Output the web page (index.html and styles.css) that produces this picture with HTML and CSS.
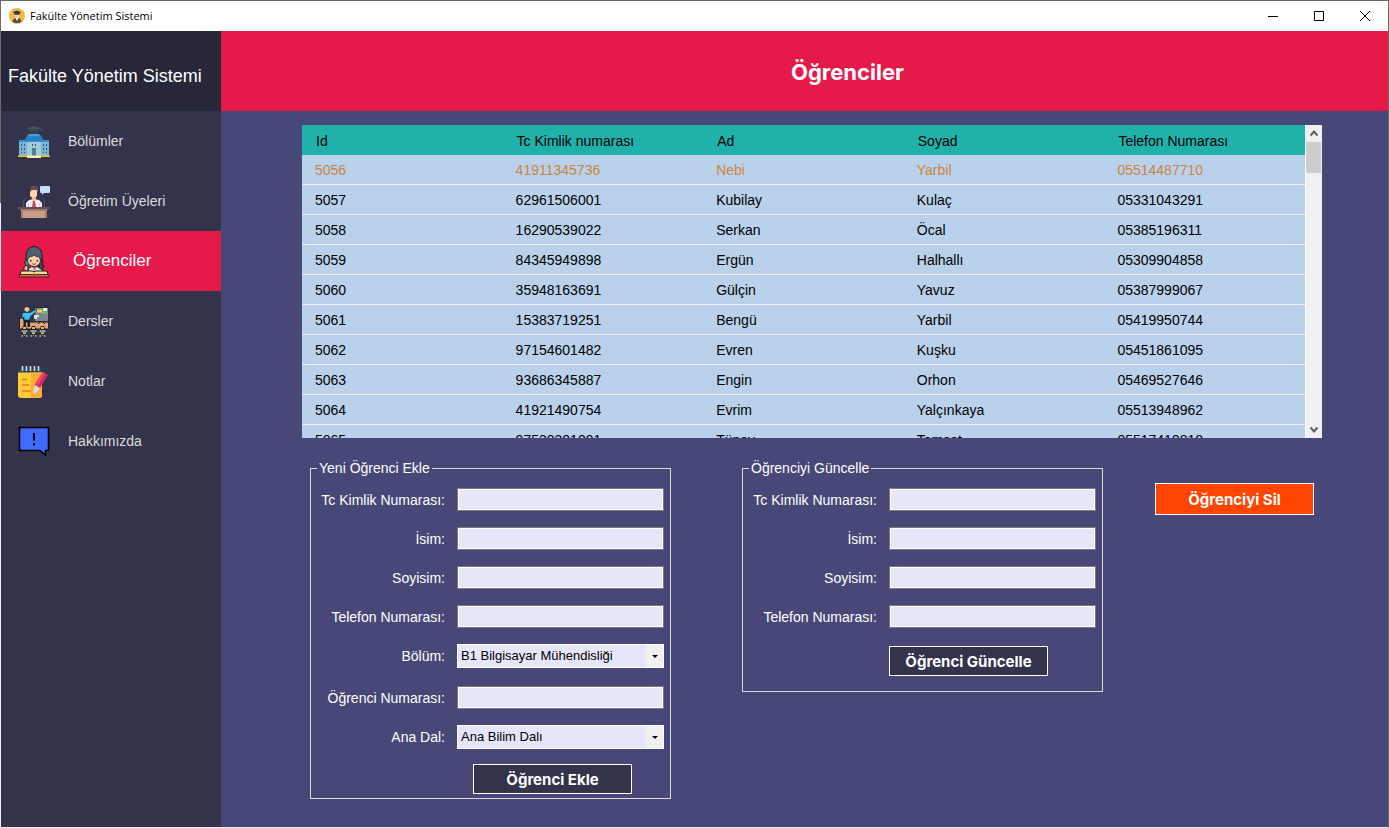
FILE: index.html
```html
<!DOCTYPE html>
<html lang="tr">
<head>
<meta charset="utf-8">
<title>Fakülte Yönetim Sistemi</title>
<meta name="viewport" content="width=device-width, initial-scale=1">
<link rel="stylesheet" href="styles.css">
</head>
<body>
<div class="window">
  <header class="titlebar">
    <svg class="app-icon" viewBox="0 0 16 16" aria-hidden="true"><circle cx="8" cy="8" r="8" fill="#f5b83d"/><path d="M3.500 13.500Q4 10.500 6.500 10h3q2.500.5 3 3.500Q8 16.500 3.500 13.500z" fill="#4b4a52"/><path d="M6.500 10h3L8 13z" fill="#fff"/><circle cx="8" cy="7.500" r="2.600" fill="#f6d3ad"/><path d="M3.500 4.300 8 2.500l4.500 1.800L8 6z" fill="#3c3b41"/><path d="M5.300 5h5.400v1.800H5.300z" fill="#3c3b41"/></svg>
    <span class="titlebar-text">Fakülte Yönetim Sistemi</span>
    <div class="window-controls">
      <button type="button" class="window-button" aria-label="Simge durumuna küçült"><svg viewBox="0 0 12 12"><path d="M1 6.500h10"/></svg></button>
      <button type="button" class="window-button" aria-label="Ekranı kapla"><svg viewBox="0 0 12 12"><path d="M1.500 1.500h9v9h-9z"/></svg></button>
      <button type="button" class="window-button" aria-label="Kapat"><svg viewBox="0 0 12 12"><path d="m1 1 10 10M11 1 1 11"/></svg></button>
    </div>
  </header>
  <div class="app">
    <aside class="sidebar">
      <div class="brand">Fakülte Yönetim Sistemi</div>
      <nav class="menu">
        <a class="menu-item" href="#bolumler">
          <svg class="menu-icon" viewBox="0 0 32 32" aria-hidden="true"><path d="M1 15h9v15H1z" fill="#79b4d8"/><path d="M22 15h9v15h-9z" fill="#79b4d8"/><path d="M9 15h14v15H9z" fill="#a1cbd9"/><path d="M1 14h30v2H1z" fill="#3a91d0"/><path d="M7 13 10 8.500h12l3 4.500v2H7z" fill="#2880c7"/><path d="M10 10h12l-1.500-2h-9z" fill="#46a0dc"/><path d="M8 2.500 16 0l8 2.500-8 2z" fill="#46525e"/><path d="M11 3.500h10v3q-5 2-10 0z" fill="#36434c"/><path d="M23.500 2.500V6" stroke="#46525e"/><path d="M3 18h1v2H3zm3 0h1v2H6zM3 22h1v2H3zm3 0h1v2H6zM3 26h1v1H3zm3 0h1v1H6zM25 18h1v2h-1zm3 0h1v2h-1zM25 22h1v2h-1zm3 0h1v2h-1zM25 26h1v1h-1zm3 0h1v1h-1zM14 18h1v2h-1zm3 0h1v2h-1z" fill="#345a7b"/><path d="M14 22h4v8h-4z" fill="#527d91"/><path d="M0 29.500h9V31H0zm23 0h9V31h-9z" fill="#f5c700"/><path d="M9 29.500h14V32H9z" fill="#ffedae"/></svg>
          <span>Bölümler</span></a>
        <a class="menu-item" href="#ogretim-uyeleri">
          <svg class="menu-icon" viewBox="0 0 32 32" aria-hidden="true"><path d="M8 22v-5l3-3 5-1 5 1 3 3v5z" fill="#f0f4fa"/><path d="m10 17 1 5M22 17l-1 5" stroke="#c3cede"/><path d="M14 10h4v4l-2 2-2-2z" fill="#edb68d"/><path d="M15 15h2l1 6-2 1-2-1z" fill="#dc3f50"/><path d="M12 4h7v6q-3.500 4-7 0z" fill="#ffd3ad"/><path d="M12 6V1.500l2-1.500h4.500L20 2v4h-1V4h-5z" fill="#5c5054"/><path d="M22 1q0-1 1-1h8q1 0 1 1v5q0 1-1 1h-5l-2 2V7h-1q-1 0-1-1z" fill="#c7e0ff"/><path d="M7.500 12Q5.500 13 5.500 16v6M25 12q1.500 1 1.500 4v6" fill="none" stroke="#55555b"/><path d="M0 21h32v2H0z" fill="#615155"/><path d="M2 23h28l-1 2H3z" fill="#a87967"/><path d="M3 25h26v7H3z" fill="#c89c88"/><path d="M3 25h2v7H3zm24 0h2v7h-2z" fill="#ad7969"/></svg>
          <span>Öğretim Üyeleri</span></a>
        <a class="menu-item menu-item-active" href="#ogrenciler" aria-current="page">
          <svg class="menu-icon" viewBox="0 0 32 32" aria-hidden="true"><path d="M8 14V9q1-8 8-8.500Q23.500 1 24 9v5z" fill="#4e6070" stroke="#151c22"/><path d="M21 13q4 0 4 3l-1 2 2 2-2 4h-3z" fill="#3c4853" stroke="#111"/><path d="M8 14q-2 2-1 4l2 2 3-3z" fill="#28a58c" stroke="#111" stroke-width=".8"/><path d="M9.500 14 11 11l4-1 1-2 1 2 4 1 1.500 3q-.5 6-6.500 6.500Q10 20 9.500 14z" fill="#ffd0ac" stroke="#26282b" stroke-width=".8"/><path d="M12 14h1.500v1.500H12zm6.500 0H20v1.500h-1.500z" fill="#222"/><path d="m14 17.500 2 1 2-1" fill="none" stroke="#a13c38"/><path d="m11 22 3-1.500 2 1.500 3-1.500 4 2.500 2 2.500H9z" fill="#e3edf1" stroke="#1a2025"/><path d="m15 21 1.500 4 2-4" fill="#d95555"/><path d="M6 25v-4q2-3 4-1v5z" fill="#efb293" stroke="#1c2024"/><path d="M3 25h12l1 1 1-1h12l1 4H2z" fill="#ffdf8c" stroke="#261917"/><path d="M16 26v3" stroke="#b98237"/><path d="M1 28.500h14l1 1 1-1h14V31H1z" fill="#e06060" stroke="#26191b" stroke-width=".8"/></svg>
          <span>Öğrenciler</span></a>
        <a class="menu-item" href="#dersler">
          <svg class="menu-icon" viewBox="0 0 32 32" aria-hidden="true"><path d="M1.500 12H5l2 4h23.500v7h-29z" fill="#dda57c" stroke="#27201f"/><path d="M16.500 1.500h14v14h-14z" fill="#7b858c" stroke="#272c31"/><path d="M18 3.500h6v3h-6z" fill="#ffd53d"/><path d="M25 2h4v3h-4z" fill="#e5edf1"/><path d="M24 5.500h5v2.500h-5z" fill="#6ac259"/><path d="M16 9h5v2h-2v2h-3z" fill="#dce2e6"/><path d="m22 16-2 2m5-2 2 2" stroke="#111"/><path d="M6 2.500Q6.500.5 9 .5t3 2V5q-3 3-6 0z" fill="#ecc09d" stroke="#262422"/><path d="m4 7.500 2-1h6L18 3l1 2-7 6v3H6v-3l-2 2z" fill="#42bef0" stroke="#162a38" stroke-width=".7"/><path d="M5.500 14H12v7H9.500v-5H8v5H5.500z" fill="#17202b"/><g id="pupils"><path d="M3.500 28v-4l1.500-4h3l1.500 4v4z" fill="#17191b"/><path d="M5 21h3v2H5z" fill="#e7be45"/><path d="M3.500 24h6v2.500h-6z" fill="#929ca3"/><path d="M5 26.500h3V28H5z" fill="#e7be45"/><path d="M3.500 29h1.500v2H3.500zM6 29h1v1H6zm2 0h1.500v2H8z" fill="#9c9b89"/></g><use href="#pupils" x="9"/><use href="#pupils" x="18"/></svg>
          <span>Dersler</span></a>
        <a class="menu-item" href="#notlar">
          <svg class="menu-icon" viewBox="0 0 32 32" aria-hidden="true"><path d="M0 7V4q0-3 3-3h18q3 0 3 3v3z" fill="#2d4654"/><path d="M0 6.500h24V29q0 3-3 3H3q-3 0-3-3z" fill="#ffcc38"/><path d="M13 6.500h11V29q0 3-3 3h-8z" fill="#ffae34"/><path d="M4.500 0v5M8.500 0v5m4-5v5m4-5v5m4-5v5" stroke="#cbdce7" stroke-width="1.600"/><path d="M4 13.500h5M4 19h7M4 25h9" stroke="#e07a36" stroke-width="1.500"/><path d="m17 18 8-12 5 3-8 13-5 3z" fill="#de2460"/><path d="m17 18 8-12 2 1.500-7 12z" fill="#f14374"/><path d="m17 19 5 3-3 4-4 2 1-5z" fill="#d6dee7"/><path d="m25 5 2-3h4l1 2-2 4z" fill="#2b3c48"/><path d="M31 5v5l-4 8" fill="none" stroke="#2b3c48" stroke-width="2"/></svg>
          <span>Notlar</span></a>
        <a class="menu-item" href="#hakkimizda">
          <svg class="menu-icon" viewBox="0 0 32 32" aria-hidden="true"><path d="M1.500 1.500h29v23h-3v4.500l-5.500-4.500H1.500z" fill="#3f69ff" stroke="#000" stroke-width="1.600"/><path d="M16 7v7.500M16 17v2.500" stroke="#000" stroke-width="2"/></svg>
          <span>Hakkımızda</span></a>
      </nav>
    </aside>
    <main class="main">
      <div class="page-header"><h1 class="page-title">Öğrenciler</h1></div>
      <div class="content">
        <div class="grid-view">
          <div class="table-clip">
            <table class="students">
              <thead><tr><th scope="col">Id</th><th scope="col">Tc Kimlik numarası</th><th scope="col">Ad</th><th scope="col">Soyad</th><th scope="col">Telefon Numarası</th></tr></thead>
              <tbody>
                <tr class="selected"><td>5056</td><td>41911345736</td><td>Nebi</td><td>Yarbil</td><td>05514487710</td></tr>
                <tr><td>5057</td><td>62961506001</td><td>Kubilay</td><td>Kulaç</td><td>05331043291</td></tr>
                <tr><td>5058</td><td>16290539022</td><td>Serkan</td><td>Öcal</td><td>05385196311</td></tr>
                <tr><td>5059</td><td>84345949898</td><td>Ergün</td><td>Halhallı</td><td>05309904858</td></tr>
                <tr><td>5060</td><td>35948163691</td><td>Gülçin</td><td>Yavuz</td><td>05387999067</td></tr>
                <tr><td>5061</td><td>15383719251</td><td>Bengü</td><td>Yarbil</td><td>05419950744</td></tr>
                <tr><td>5062</td><td>97154601482</td><td>Evren</td><td>Kuşku</td><td>05451861095</td></tr>
                <tr><td>5063</td><td>93686345887</td><td>Engin</td><td>Orhon</td><td>05469527646</td></tr>
                <tr><td>5064</td><td>41921490754</td><td>Evrim</td><td>Yalçınkaya</td><td>05513948962</td></tr>
                <tr><td>5065</td><td>97530301091</td><td>Tüney</td><td>Tamsat</td><td>05517419810</td></tr>
              </tbody>
            </table>
          </div>
          <div class="scrollbar" aria-hidden="true">
            <svg class="scroll-arrow" viewBox="0 0 16 17"><path d="m4.500 10.500 3.500-4 3.500 4"/></svg>
            <div class="scroll-thumb"></div>
            <svg class="scroll-arrow scroll-arrow-down" viewBox="0 0 16 17"><path d="m4.500 6.500 3.500 4 3.500-4"/></svg>
          </div>
        </div>
        <div class="actions">
          <div class="forms">
            <form class="form">
              <fieldset class="group">
                <legend>Yeni Öğrenci Ekle</legend>
                <div class="fields">
                  <div class="field"><label for="add-tc">Tc Kimlik Numarası:</label><input id="add-tc" class="text-box" type="text"></div>
                  <div class="field"><label for="add-name">İsim:</label><input id="add-name" class="text-box" type="text"></div>
                  <div class="field"><label for="add-surname">Soyisim:</label><input id="add-surname" class="text-box" type="text"></div>
                  <div class="field"><label for="add-phone">Telefon Numarası:</label><input id="add-phone" class="text-box" type="text"></div>
                  <div class="field field-spaced"><label for="add-department">Bölüm:</label>
                    <div class="combo"><select id="add-department" class="combo-select"><option>B1 Bilgisayar Mühendisliği</option></select><span class="combo-button"></span></div></div>
                  <div class="field"><label for="add-number">Öğrenci Numarası:</label><input id="add-number" class="text-box" type="text"></div>
                  <div class="field"><label for="add-major">Ana Dal:</label>
                    <div class="combo"><select id="add-major" class="combo-select"><option>Ana Bilim Dalı</option></select><span class="combo-button"></span></div></div>
                </div>
                <div class="form-footer form-footer-add"><button type="button" class="button">Öğrenci Ekle</button></div>
              </fieldset>
            </form>
            <form class="form">
              <fieldset class="group group-update">
                <legend>Öğrenciyi Güncelle</legend>
                <div class="fields">
                  <div class="field"><label for="update-tc">Tc Kimlik Numarası:</label><input id="update-tc" class="text-box" type="text"></div>
                  <div class="field"><label for="update-name">İsim:</label><input id="update-name" class="text-box" type="text"></div>
                  <div class="field"><label for="update-surname">Soyisim:</label><input id="update-surname" class="text-box" type="text"></div>
                  <div class="field"><label for="update-phone">Telefon Numarası:</label><input id="update-phone" class="text-box" type="text"></div>
                </div>
                <div class="form-footer form-footer-update"><button type="button" class="button">Öğrenci Güncelle</button></div>
              </fieldset>
            </form>
          </div>
          <button type="button" class="button button-danger">Öğrenciyi Sil</button>
        </div>
      </div>
    </main>
  </div>
</div>
</body>
</html>
```
FILE: styles.css
```css
* { box-sizing: border-box; }

body {
  margin: 0;
  min-height: 100vh;
  display: flex;
  font: 14px/16px "Liberation Sans", Arial, sans-serif;
  color: #fff;
  background: linear-gradient(#6f6864 203px, #eeeef4 203px);
}

.window {
  flex: 1;
  display: flex;
  flex-direction: column;
  border: 1px solid transparent;
  border-right-color: #6f6864;
}

.titlebar {
  display: flex;
  align-items: center;
  height: 30px;
  padding-left: 8px;
  background: #fff;
  color: #000;
}
.app-icon { width: 16px; height: 16px; margin-right: 5px; }
.titlebar-text { font: 11px/16px "Open Sans", "Noto Sans", sans-serif; }
.window-controls { display: flex; margin-left: auto; }
.window-button {
  width: 46px;
  height: 29px;
  padding: 0;
  border: 0;
  background: none;
  display: flex;
  align-items: center;
  justify-content: center;
}
.window-button svg { width: 12px; height: 12px; fill: none; stroke: #000; }

.app { flex: 1; display: flex; }

.sidebar { width: 220px; flex: none; background: #33334c; }
.brand {
  height: 80px;
  padding: 10px 7px 0;
  display: flex;
  align-items: center;
  background: #272739;
  font-size: 18px;
  line-height: 20px;
}
.menu-item {
  height: 60px;
  padding-left: 17px;
  display: flex;
  align-items: center;
  gap: 18px;
  color: #dcdcdc;
  text-decoration: none;
}
.menu-icon { width: 32px; height: 32px; flex: none; margin-top: 2px; }
.menu-item-active {
  gap: 23px;
  background: #e51a4b;
  color: #fff;
  font-size: 17px;
}

.main { flex: 1; min-width: 0; background: #484878; }
.page-header {
  height: 80px;
  padding: 2px 0 0 86px;
  display: flex;
  align-items: center;
  justify-content: center;
  background: #e51a4b;
}
.page-title {
  margin: 0;
  font: 700 22px/28px Inter, sans-serif;
}
.content { padding: 14px 66px 28px 81px; }

.grid-view { display: flex; height: 313px; }
.table-clip { flex: 1; overflow: hidden; background: #b9d1ea; }
.students {
  width: 100%;
  table-layout: fixed;
  border-spacing: 0;
  color: #000;
}
.students th,
.students td {
  height: 30px;
  padding: 1px 13px 0;
  text-align: left;
  font-weight: 400;
}
.students th { padding: 2px 14px 0; background: #20b2aa; }
.students td { border-bottom: 1px solid #f0f0f0; }
.students .selected { color: #cd853f; }

.scrollbar {
  width: 17px;
  display: flex;
  flex-direction: column;
  background: #f0f0f0;
  border-left: 1px solid #fff;
}
.scroll-arrow {
  width: 16px;
  height: 17px;
  fill: none;
  stroke: #606060;
  stroke-width: 2;
}
.scroll-thumb { height: 31px; margin-right: 1px; background: #cdcdcd; }
.scroll-arrow-down { margin-top: auto; }

.actions {
  display: flex;
  align-items: flex-start;
  gap: 52px;
  padding: 22px 8px 0;
}
.forms {
  flex: 1;
  display: grid;
  grid-template-columns: 1fr 1fr;
  align-items: start;
  gap: 71px;
}
.group {
  min-width: 0;
  margin: 0;
  padding: 12px 6px 4px;
  border: 1px solid #dcdcdc;
}
.group-update { padding-bottom: 15px; }
.group legend { padding: 0 2px; }
.fields { display: grid; gap: 16px; }
.field {
  display: grid;
  grid-template-columns: 1fr 207px;
  align-items: center;
  gap: 12px;
}
.field-spaced { margin-bottom: 2px; }
.field label { text-align: right; white-space: nowrap; }
.text-box {
  width: 100%;
  height: 23px;
  padding: 0 3px;
  border: 1px solid #7a7a7a;
  outline: 1px solid #fff;
  outline-offset: -2px;
  background: #e6e6fa;
  font: inherit;
}
.combo {
  display: flex;
  height: 24px;
  border: 1px solid #fff;
  background: #e6e6fa;
}
.combo-select {
  flex: 1;
  min-width: 0;
  padding: 0 3px;
  appearance: none;
  border: 0;
  background: none;
  color: #000;
  font: inherit;
  font-size: 13px;
}
.combo-button {
  width: 17px;
  display: flex;
  align-items: center;
  justify-content: center;
  background: #f0f0f0;
}
.combo-button::before {
  content: "";
  border: 3px solid transparent;
  border-top-color: #000;
  border-bottom: 0;
}

.form-footer { display: flex; }
.form-footer-add { padding: 15px 0 0 156px; }
.form-footer-update { padding: 18px 0 0 140px; }
.button {
  width: 159px;
  height: 30px;
  padding: 2px 0 0;
  border: 1px solid #fff;
  background: #33334c;
  color: #fff;
  font: 700 15px/18px Inter, sans-serif;
}
.button-danger { flex: none; height: 32px; margin-top: 23px; background: #ff4500; }
```
